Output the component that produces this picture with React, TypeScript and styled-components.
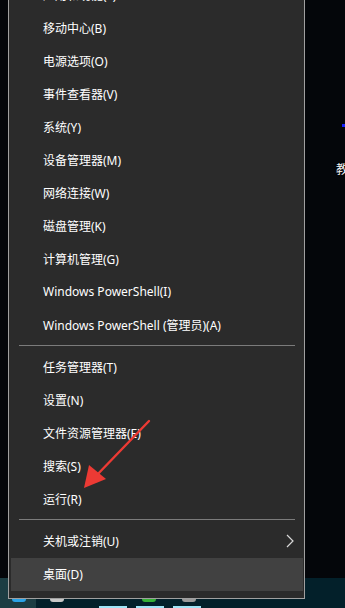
import * as React from "react";
import styled, { createGlobalStyle } from "styled-components";

const GlobalStyle = createGlobalStyle`
  html, body {
    margin: 0;
    padding: 0;
    background: #04060a;
    overflow: hidden;
  }
  * {
    box-sizing: border-box;
  }
`;

type Entry = { label: string; hover?: boolean; submenu?: boolean } | "sep";

const entries: Entry[] = [
  { label: "应用和功能(F)" },
  { label: "移动中心(B)" },
  { label: "电源选项(O)" },
  { label: "事件查看器(V)" },
  { label: "系统(Y)" },
  { label: "设备管理器(M)" },
  { label: "网络连接(W)" },
  { label: "磁盘管理(K)" },
  { label: "计算机管理(G)" },
  { label: "Windows PowerShell(I)" },
  { label: "Windows PowerShell (管理员)(A)" },
  "sep",
  { label: "任务管理器(T)" },
  { label: "设置(N)" },
  { label: "文件资源管理器(E)" },
  { label: "搜索(S)" },
  { label: "运行(R)" },
  "sep",
  { label: "关机或注销(U)", submenu: true },
  { label: "桌面(D)", hover: true },
];

const App: React.FC = () => {
  return (
    <Screen>
      <GlobalStyle />
      <Desktop>
        <DesktopMark />
        <DesktopLabel>教</DesktopLabel>
      </Desktop>
      <Taskbar>
        <StartTile />
        <TaskIcon $left={12} $color="#2aa3e8" />
        <TaskIcon $left={50} $color="#c8c8c8" />
        <TaskIcon $left={142} $color="#35b035" />
        <TaskIcon $left={182} $color="#9a9a9a" />
        <Indicators>
          <Indicator />
          <Indicator />
          <Indicator />
        </Indicators>
      </Taskbar>

      <Menu>
        {entries.map((e, i) =>
          e === "sep" ? (
            <Separator key={i} />
          ) : (
            <Item key={i} $hover={e.hover}>
              <span>{e.label}</span>
              {e.submenu && (
                <svg width="8" height="14" viewBox="0 0 8 14">
                  <polyline
                    points="1,1 7,7 1,13"
                    fill="none"
                    stroke="#d8d8d8"
                    strokeWidth="1.2"
                  />
                </svg>
              )}
            </Item>
          )
        )}
      </Menu>

      <Arrow width="70" height="70" viewBox="0 0 70 70">
        <line x1="66" y1="2" x2="12" y2="58" stroke="#ec3a34" strokeWidth="2.4" strokeLinecap="round" />
        <polygon points="1,69 6,46 23,60" fill="#ec3a34" />
      </Arrow>
    </Screen>
  );
};

export default App;

/* Styles */
const Screen = styled.div`
  position: relative;
  width: 345px;
  height: 608px;
  display: flex;
  flex-direction: column;
  overflow: hidden;
  font-family: "Noto Sans", "Noto Sans CJK SC", sans-serif;
`;

const Desktop = styled.div`
  position: relative;
  flex: 1;
  background: #04060a;
`;

const DesktopMark = styled.div`
  position: absolute;
  left: 342px;
  top: 124px;
  width: 4px;
  height: 3px;
  background: #1420ff;
`;

const DesktopLabel = styled.div`
  position: absolute;
  left: 336px;
  top: 160px;
  color: #f4f4f4;
  font-size: 12px;
  font-family: "Noto Sans CJK SC", sans-serif;
  text-shadow: 0 0 2px #000;
`;

const Taskbar = styled.div`
  position: relative;
  height: 30px;
  background: #03202a;
  display: flex;
  align-items: flex-end;
`;

const StartTile = styled.div`
  position: absolute;
  left: 0;
  top: 0;
  width: 36px;
  height: 30px;
  background: #1c3d43;
`;

const TaskIcon = styled.div<{ $left: number; $color: string }>`
  position: absolute;
  left: ${(p) => p.$left}px;
  top: 20px;
  width: 14px;
  height: 4px;
  border-radius: 0 0 3px 3px;
  background: ${(p) => p.$color};
`;

const Indicators = styled.div`
  display: flex;
  gap: 9px;
  margin-left: 99px;
`;

const Indicator = styled.div`
  width: 28px;
  height: 2px;
  background: #9fe4f6;
`;

const Menu = styled.div`
  position: absolute;
  left: 8px;
  bottom: 9px;
  width: 297px;
  background: #2b2b2b;
  border: 1px solid #a0a0a0;
  padding: 8px 0 7px;
  display: flex;
  flex-direction: column;
`;

const Item = styled.div<{ $hover?: boolean }>`
  height: 33px;
  margin: 0 1px 0 2px;
  padding: 0 9px 2px 32px;
  display: flex;
  align-items: center;
  justify-content: space-between;
  color: #ffffff;
  font-size: 12px;
  white-space: nowrap;
  background: ${(p) => (p.$hover ? "#414141" : "transparent")};
`;

const Separator = styled.div`
  height: 1px;
  margin: 3px 9px 5px 10px;
  background: #7b7b7b;
`;

const Arrow = styled.svg`
  position: absolute;
  left: 83px;
  top: 419px;
`;
